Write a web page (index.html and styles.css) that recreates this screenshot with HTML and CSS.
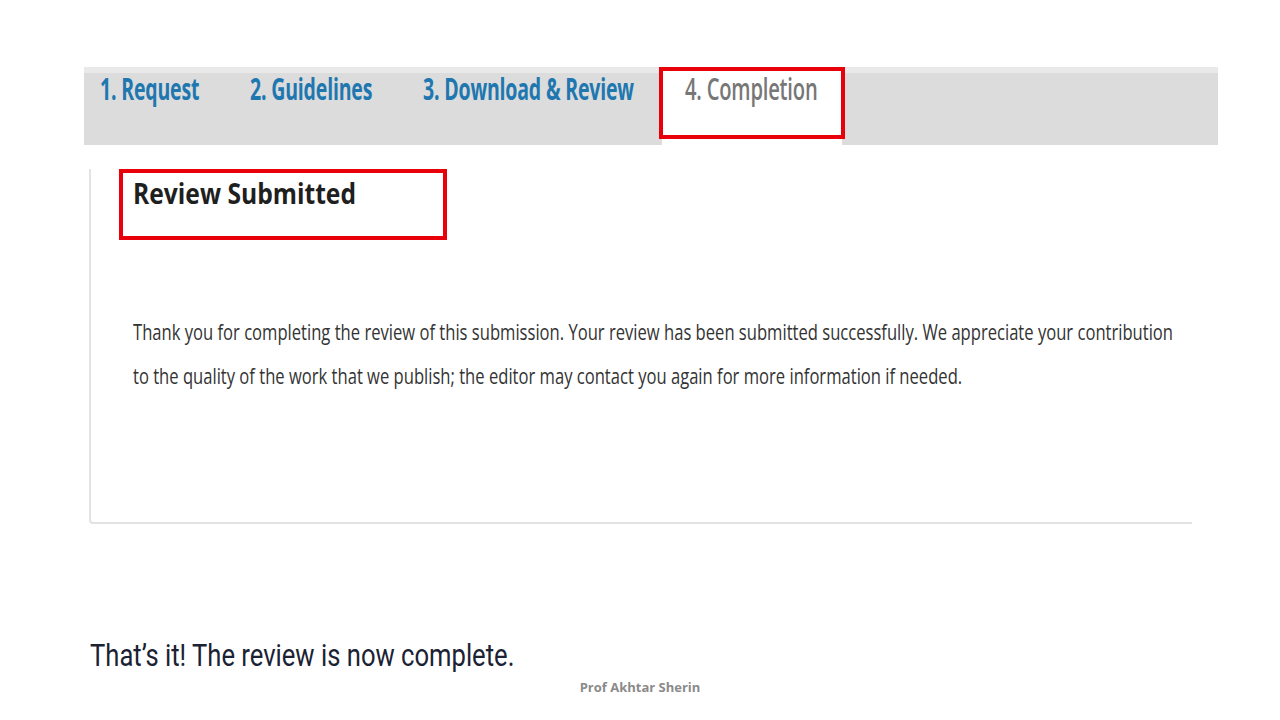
FILE: index.html
```html
<!DOCTYPE html>
<html>
<head>
<meta charset="utf-8">
<link rel="stylesheet" href="styles.css">
</head>
<body>
<div class="slide">
  <nav class="tabs">
    <div class="tab t1"><span class="cond tab-label">1. Request</span></div>
    <div class="tab t2"><span class="cond tab-label">2. Guidelines</span></div>
    <div class="tab t3"><span class="cond tab-label">3. Download &amp; Review</span></div>
    <div class="tab t4 active"><span class="cond tab-label">4. Completion</span></div>
  </nav>
  <section class="panel">
    <div class="heading-box"><h1 class="cond heading">Review Submitted</h1></div>
    <p class="message"><span class="cond msg-line">Thank you for completing the review of this submission. Your review has been submitted successfully. We appreciate your contribution</span><br><span class="cond msg-line">to the quality of the work that we publish; the editor may contact you again for more information if needed.</span></p>
  </section>
  <p class="caption"><span class="cond cap-text">That’s it! The review is now complete.</span></p>
  <footer class="footer">Prof Akhtar Sherin</footer>
</div>
</body>
</html>
```
FILE: styles.css
```css
*, *::before, *::after { box-sizing: border-box; }
html, body { margin: 0; padding: 0; background: #fff; }
.slide {
  width: 1280px;
  height: 720px;
  overflow: hidden;
  padding-top: 67px;
  font-family: "Open Sans", "Noto Sans", sans-serif;
}
.cond {
  display: inline-block;
  transform-origin: left center;
  white-space: nowrap;
}
.tabs {
  display: flex;
  margin-left: 84px;
  width: 1134px;
  height: 78px;
  background: #dcdcdc;
  border-top: 6px solid #e9e9e9;
  padding-left: 16px;
}
.tab {
  height: 100%;
  position: relative;
}
.t1 { width: 150px; }
.t2 { width: 173px; }
.t3 { width: 239px; }
.t4 { width: 180px; }
.tab-label {
  font-size: 31px;
  font-weight: 700;
  color: #2077b0;
  line-height: 30px;
  transform: scaleX(0.63);
  letter-spacing: -0.3px;
}
.active {
  background: #fff;
  margin-top: -6px;
  height: calc(100% + 6px);
  padding-left: 23px;
  padding-top: 6px;
}
.active .tab-label { color: #777; font-weight: 600; transform: scaleX(0.65); }
.active::after {
  content: "";
  position: absolute;
  left: -3px;
  right: -3px;
  top: 0;
  height: 72px;
  border: 4px solid #e8000b;
}
.panel {
  margin-left: 89px;
  margin-top: 27px;
  width: 1103px;
  height: 355px;
  border-left: 2px solid #e2e2e2;
  border-bottom: 2px solid #e2e2e2;
  border-bottom-left-radius: 4px;
}
.heading-box {
  margin-left: 28px;
  margin-top: -3px;
  width: 328px;
  height: 71px;
  border: 4px solid #e8000b;
  padding-left: 10px;
}
.heading {
  margin: 0;
  font-size: 28px;
  font-weight: 700;
  color: #1f1f1f;
  line-height: 40px;
  transform: scaleX(0.88);
}
.message {
  margin: 70px 0 0 42px;
  font-size: 21px;
  line-height: 44px;
  color: #333;
}
.msg-line { transform: scaleX(0.79); }
.caption {
  margin: 111px 0 0 90px;
  font-family: Roboto, "Noto Sans", sans-serif;
  font-size: 32px;
  line-height: 40px;
  color: #1b2233;
}
.cap-text { transform: scaleX(0.8); }
.footer {
  text-align: center;
  font-family: "Open Sans", sans-serif;
  font-weight: 700;
  font-size: 13px;
  color: #8a8a8a;
  margin-top: 3px;
}
```
